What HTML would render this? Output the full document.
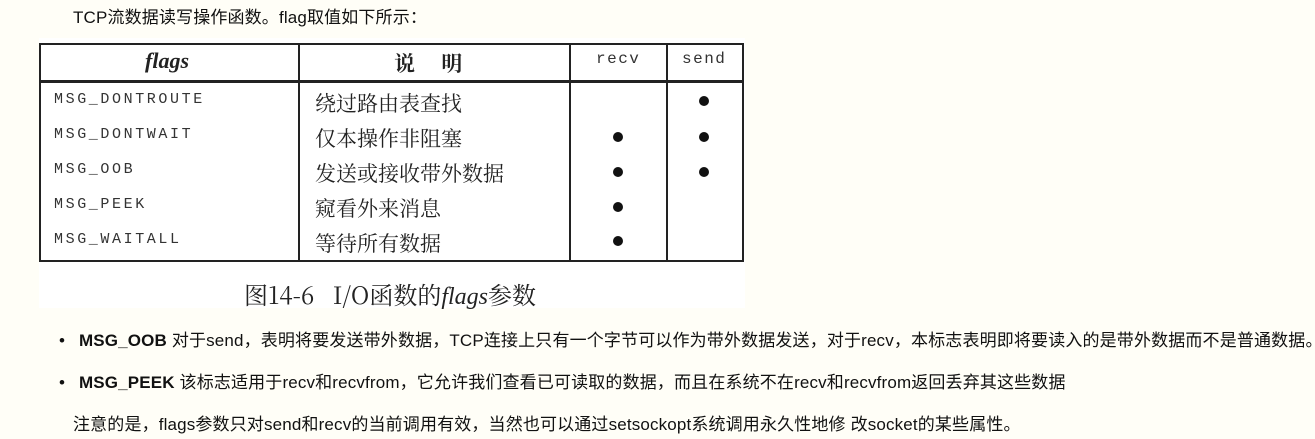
<!DOCTYPE html>
<html><head><meta charset="utf-8"><style>
body{margin:0;width:1315px;height:439px;background:#fffef7;font-family:"Liberation Sans","Noto Sans CJK SC",sans-serif;font-size:17px;color:#111;position:relative;overflow:hidden}
.t{position:absolute;white-space:nowrap;line-height:20px;letter-spacing:0.15px}
.img{position:absolute;left:39px;top:38px;width:706px;height:270px;background:#fff}
.l{position:absolute;background:#222}
.m{position:absolute;font-family:"Liberation Mono",monospace;font-size:15px;letter-spacing:2.6px;color:#333;white-space:nowrap}
.c{position:absolute;font-family:"Noto Serif CJK SC","Noto Sans CJK SC",serif;font-size:21px;color:#222;white-space:nowrap}
.d{position:absolute;width:10px;height:10px;border-radius:50%;background:#111}
</style></head><body>
<div class="t" style="left:73px;top:8px">TCP流数据读写操作函数。flag取值如下所示：</div>
<div class="img">
<div class="l" style="left:0;top:5px;width:705px;height:2px"></div>
<div class="l" style="left:0;top:42px;width:705px;height:3px"></div>
<div class="l" style="left:0;top:222px;width:705px;height:2px"></div>
<div class="l" style="left:0;top:5px;width:2px;height:219px"></div>
<div class="l" style="left:703px;top:5px;width:2px;height:219px"></div>
<div class="l" style="left:259px;top:5px;width:2px;height:219px"></div>
<div class="l" style="left:530px;top:5px;width:2px;height:219px"></div>
<div class="l" style="left:627px;top:5px;width:2px;height:219px"></div>
<div class="c" style="left:106px;top:10px;font-family:'Liberation Serif',serif;font-style:italic;font-weight:bold;font-size:22px">flags</div>
<div class="c" style="left:355px;top:10px;font-weight:bold">说&nbsp;&nbsp;&nbsp;&nbsp;&nbsp;明</div>
<div class="m" style="left:557px;top:12px;font-size:16px;letter-spacing:1.5px">recv</div>
<div class="m" style="left:643px;top:12px;font-size:16px;letter-spacing:1.5px">send</div>
<div class="m" style="left:15px;top:53px">MSG_DONTROUTE</div>
<div class="m" style="left:15px;top:88px">MSG_DONTWAIT</div>
<div class="m" style="left:15px;top:123px">MSG_OOB</div>
<div class="m" style="left:15px;top:158px">MSG_PEEK</div>
<div class="m" style="left:15px;top:193px">MSG_WAITALL</div>
<div class="c" style="left:276px;top:50px">绕过路由表查找</div>
<div class="c" style="left:276px;top:85px">仅本操作非阻塞</div>
<div class="c" style="left:276px;top:120px">发送或接收带外数据</div>
<div class="c" style="left:276px;top:155px">窥看外来消息</div>
<div class="c" style="left:276px;top:190px">等待所有数据</div>
<div class="d" style="left:660px;top:58px"></div>
<div class="d" style="left:574px;top:94px"></div><div class="d" style="left:660px;top:94px"></div>
<div class="d" style="left:574px;top:129px"></div><div class="d" style="left:660px;top:129px"></div>
<div class="d" style="left:574px;top:164px"></div>
<div class="d" style="left:574px;top:198px"></div>
<div class="c" style="left:205px;top:238px;font-size:24px">图14-6&nbsp;&nbsp;&nbsp;I/O函数的<i style="font-family:'Liberation Serif',serif">flags</i>参数</div>
</div>
<div class="t" style="left:59px;top:331px">•</div>
<div class="t" style="left:79px;top:331px"><b>MSG_OOB</b> 对于send，表明将要发送带外数据，TCP连接上只有一个字节可以作为带外数据发送，对于recv，本标志表明即将要读入的是带外数据而不是普通数据。</div>
<div class="t" style="left:59px;top:373px">•</div>
<div class="t" style="left:79px;top:373px"><b>MSG_PEEK</b> 该标志适用于recv和recvfrom，它允许我们查看已可读取的数据，而且在系统不在recv和recvfrom返回丢弃其这些数据</div>
<div class="t" style="left:73px;top:415px">注意的是，flags参数只对send和recv的当前调用有效，当然也可以通过setsockopt系统调用永久性地修 改socket的某些属性。</div>
</body></html>
